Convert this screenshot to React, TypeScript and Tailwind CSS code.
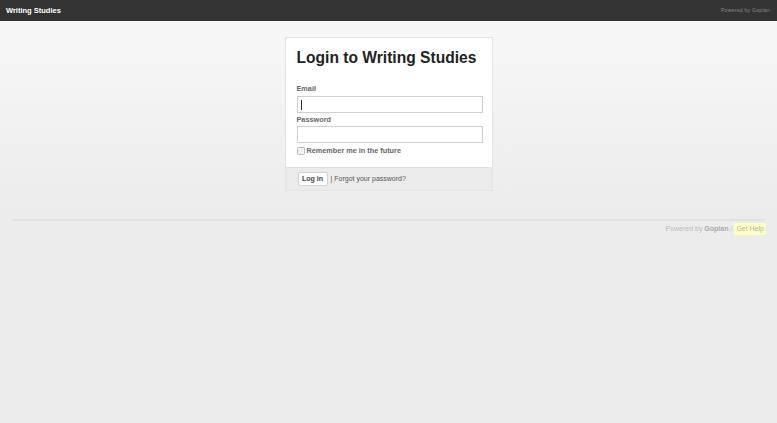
export default function App() {
    return (
        <div className="min-h-screen bg-[#ececec] font-['Liberation_Sans',Arial,sans-serif]">
            {/* top bar */}
            <header className="flex h-[21px] items-center justify-between bg-[#333333] px-[6px]">
                <span className="text-[7.5px] font-bold text-white">Writing Studies</span>
                <span className="pr-[1px] text-[5px] tracking-[0.3px] text-[#8a8a8a]">Powered by Goplan</span>
            </header>

            <div className="bg-gradient-to-b from-[#f7f7f7] to-[#ececec] pt-[16px] pb-[28px]">
                {/* login card */}
                <div className="mx-auto w-[208px] border border-[#e4e4e4] bg-white">
                    <div className="px-[11px] pt-[10px] pb-[12px]">
                        <h1 className="h-[20px] whitespace-nowrap text-[15.6px] leading-[20px] font-bold text-[#222]">
                            Login to Writing Studies
                        </h1>

                        <label className="mt-[16px] block h-[10px] text-[7.3px] leading-[10px] font-bold text-[#666]">
                            Email
                        </label>
                        <div className="mt-[2px] flex h-[17px] w-[186px] items-center border border-[#cfcfcf] bg-white px-[3px]">
                            <span className="h-[10px] w-px bg-[#333]" />
                        </div>

                        <label className="mt-[2px] block h-[10px] text-[7.3px] leading-[10px] font-bold text-[#666]">
                            Password
                        </label>
                        <div className="mt-[1px] h-[17px] w-[186px] border border-[#cfcfcf] bg-white" />

                        <div className="mt-[4px] flex h-[8px] items-center gap-[2px]">
                            <span className="h-[8px] w-[8px] rounded-[1.5px] border border-[#bbb] bg-[#f2f2f2]" />
                            <span className="text-[7.3px] font-bold text-[#666]">Remember me in the future</span>
                        </div>
                    </div>

                    {/* actions */}
                    <div className="flex h-[23px] items-center border-t border-[#e2e2e2] bg-[#ebebeb] px-[12px]">
                        <button className="h-[14px] w-[30px] rounded-[2px] border border-[#d2d2d2] bg-white text-[7px] font-bold text-[#444]">
                            Log in
                        </button>
                        <span className="ml-[3px] text-[7px] text-[#555]">| Forgot your password?</span>
                    </div>
                </div>
            </div>

            {/* footer */}
            <div className="mx-[12px] border-t-2 border-[#e2e2e2]" />
            <div className="mt-[2px] flex justify-end pr-[11px] text-[7px] text-[#bbb]">
                <span className="leading-[12px]">
                    Powered by <span className="font-bold text-[#aaa]">Goplan</span> /{' '}
                </span>
                <span className="ml-[2px] rounded-[1px] bg-[#ffffc4] px-[2px] leading-[12px] text-[#b5b5a0]">
                    Get Help
                </span>
            </div>
        </div>
    )
}
